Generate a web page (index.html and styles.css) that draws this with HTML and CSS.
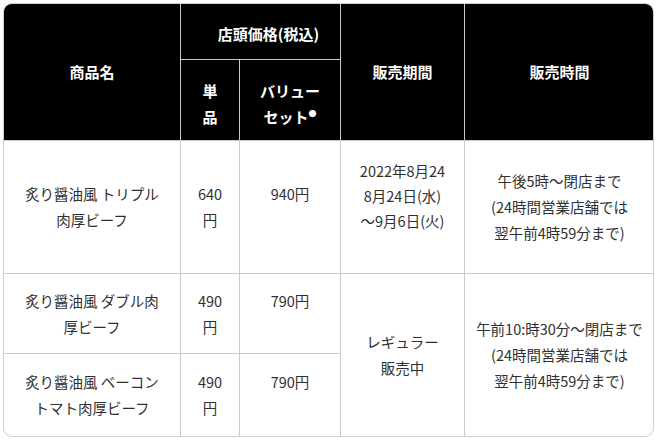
FILE: index.html
```html
<!DOCTYPE html>
<html lang="ja">
<head>
<meta charset="utf-8">
<link rel="stylesheet" href="styles.css">
</head>
<body>
<div class="frame">
<table class="menu">
  <colgroup>
    <col class="c-name"><col class="c-single"><col class="c-set"><col class="c-period"><col class="c-time">
  </colgroup>
  <thead>
    <tr class="h1">
      <th rowspan="2" class="hd">商品名</th>
      <th colspan="2" class="hd price-head">店頭価格(税込)</th>
      <th rowspan="2" class="hd">販売期間</th>
      <th rowspan="2" class="hd">販売時間</th>
    </tr>
    <tr class="h2">
      <th class="hd">単<br>品</th>
      <th class="hd">バリュー<br>セット<sup class="dot">●</sup></th>
    </tr>
  </thead>
  <tbody>
    <tr class="r1">
      <td>炙り醤油風 トリプル<br>肉厚ビーフ</td>
      <td>640<br>円</td>
      <td class="set">940円</td>
      <td class="period">2022年8月24<br>8月24日(水)<br>〜9月6日(火)</td>
      <td>午後5時〜閉店まで<br>(24時間営業店舗では<br>翌午前4時59分まで)</td>
    </tr>
    <tr class="r2">
      <td>炙り醤油風 ダブル肉<br>厚ビーフ</td>
      <td>490<br>円</td>
      <td class="set">790円</td>
      <td rowspan="2">レギュラー<br>販売中</td>
      <td rowspan="2">午前10:時30分〜閉店まで<br>(24時間営業店舗では<br>翌午前4時59分まで)</td>
    </tr>
    <tr class="r3">
      <td>炙り醤油風 ベーコン<br>トマト肉厚ビーフ</td>
      <td>490<br>円</td>
      <td class="set">790円</td>
    </tr>
  </tbody>
</table>
</div>
</body>
</html>
```

FILE: styles.css
```css
html, body {
  margin: 0;
  padding: 0;
  background: #ffffff;
}
body {
  padding: 3px 0 0 3px;
  font-family: "Noto Sans CJK JP", "Noto Sans", sans-serif;
}
.frame {
  width: 649px;
  height: 432px;
  border: 1px solid #cfcfcf;
  border-radius: 9px;
  overflow: hidden;
  background: #fff;
}
.menu {
  border-collapse: collapse;
  table-layout: fixed;
  width: 651px;
  margin: -1px;
}
.c-name { width: 177px; }
.c-single { width: 59px; }
.c-set { width: 101px; }
.c-period { width: 124px; }
.c-time { width: 190px; }

.menu th, .menu td {
  border: 1px solid #cacaca;
  text-align: center;
  vertical-align: middle;
  padding: 0;
}
.hd {
  background: #000;
  color: #fff;
  font-weight: 700;
  font-size: 15px;
  line-height: 26px;
  padding-top: 10px;
  border-color: #b8b8b8;
}
.menu .price-head {
  padding-top: 5px;
  padding-left: 16px;
}
.menu .h2 .hd { padding-top: 8px; }
.dot {
  font-size: 8px;
  vertical-align: 6px;
  line-height: 0;
}
.h1 { height: 56px; }
.h2 { height: 81px; }
.r1 { height: 133px; }
.r2 { height: 80px; }
.r3 { height: 83px; }

.menu td {
  color: #303030;
  font-size: 14.5px;
  line-height: 26px;
}
.menu td.set { padding-bottom: 26px; }
.menu td.period { padding-bottom: 24px; line-height: 25px; }
```
